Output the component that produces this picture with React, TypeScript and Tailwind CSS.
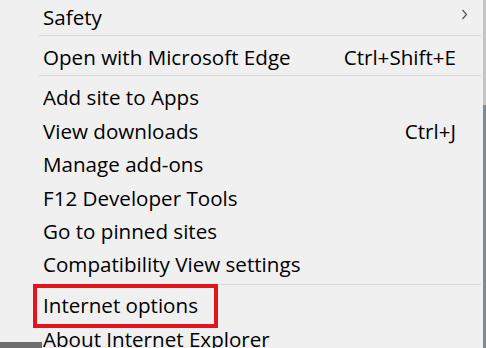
import React from "react";

type Item = { label: string; shortcut?: string; sub?: boolean };

const Row = ({ label, shortcut, sub, h }: Item & { h: string }) => (
  <div className={`relative shrink-0 flex items-center justify-between pl-[4px] pr-[27px] ${h}`}>
    <span>{label}</span>
    {shortcut && <span>{shortcut}</span>}
    {sub && (
      <svg
        className="absolute right-[15px] top-[9px]"
        width="7"
        height="11"
        viewBox="0 0 7 11"
        fill="none"
      >
        <path d="M1.5 1 L5.5 5.5 L1.5 10" stroke="#555" strokeWidth="1.2" />
      </svg>
    )}
  </div>
);

const Sep = ({ cls }: { cls: string }) => (
  <div className={`shrink-0 h-px bg-[#d9d9d9] mr-[2px] ${cls}`} />
);

export default function App() {
  return (
    <div
      className="relative flex w-[486px] h-[348px] overflow-hidden bg-[#f0f0f0] text-[#000] text-[20.6px] leading-none"
      style={{ fontFamily: '"Open Sans", "Noto Sans", sans-serif' }}
    >
      <div className="w-[39px] shrink-0" />
      <div className="flex-1 flex flex-col">
        <Row label="Safety" sub h="h-[34px]" />
        <Sep cls="mt-[1px] mb-[5px]" />
        <Row label="Open with Microsoft Edge" shortcut="Ctrl+Shift+E" h="h-[33.4px]" />
        <Sep cls="mt-[0.6px] mb-[5px]" />
        <Row label="Add site to Apps" h="h-[33.4px]" />
        <Row label="View downloads" shortcut="Ctrl+J" h="h-[33.4px]" />
        <Row label="Manage add-ons" h="h-[33.4px]" />
        <Row label="F12 Developer Tools" h="h-[33.4px]" />
        <Row label="Go to pinned sites" h="h-[33.4px]" />
        <Row label="Compatibility View settings" h="h-[33.4px]" />
        <Sep cls="mt-[2.6px] mb-[3.8px]" />
        <Row label="Internet options" h="h-[33.4px]" />
        <Row label="About Internet Explorer" h="h-[33.4px]" />
      </div>
      <div className="w-[3px] shrink-0 flex flex-col">
        <div className="h-[105px] bg-[#c4c4c4]" />
        <div className="flex-1 bg-[#7f8b94]" />
      </div>
      <div className="absolute left-0 bottom-0 w-[42px] h-[6px] bg-[#6e6e6e]" />
      <div className="absolute left-[33px] top-[284px] w-[185px] h-[44px] border-[4px] border-[#e3141c]" />
    </div>
  );
}
